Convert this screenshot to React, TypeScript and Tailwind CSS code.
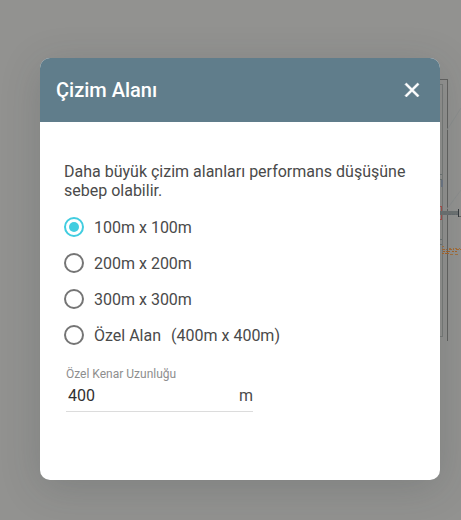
import { useState } from "react";

function PlanDrawing() {
  return (
    <svg
      aria-hidden="true"
      className="absolute left-[430px] top-[70px]"
      width="31"
      height="280"
      viewBox="430 70 31 280"
      fill="none"
      shapeRendering="crispEdges"
    >
      <path d="M430 79.5H447.5V341" stroke="#626260" />
      <path d="M430 84.5H442.5V336.5H430" stroke="#777a78" />
      <path d="M430 174.5H442M430 179.5H442M430 239.5H442M430 244.5H442" stroke="#6e7475" />
      <path d="M441.5 180V187" stroke="#6c7684" strokeWidth="2" />
      <path d="M447 209L461 190M447 130L461 108" stroke="#8b8e8d" shapeRendering="auto" />
      <path d="M440 213H459" stroke="#6d7272" strokeWidth="4" />
      <path d="M448 214.5H458" stroke="#666c6f" strokeDasharray="3 1" />
      <path d="M458.5 209V217" stroke="#343a3e" />
      <path d="M459 216.5H461" stroke="#626260" />
      <path d="M440 206.5H441.5V211M441.5 215V219.5H440" stroke="#a9504c" />
      <path d="M442 246.5H446M449 248.5H461" stroke="#a2713f" strokeDasharray="2 2 1 1" />
      <path d="M442 249.5H461" stroke="#a46a35" strokeDasharray="3 1 1 2" />
      <path d="M443 251.5H457M442 253.5H449" stroke="#a66429" strokeDasharray="2 1 4 2" />
      <path d="M450 254.5H458" stroke="#a2713f" strokeDasharray="3 2" />
    </svg>
  );
}

const sizes = ["100", "200", "300"];

export default function App() {
  const [selected, setSelected] = useState("100");
  const [edge, setEdge] = useState("400");

  const options = [
    ...sizes.map((size) => ({ value: size, label: `${size}m x ${size}m`, detail: "" })),
    { value: "custom", label: "Özel Alan", detail: `(${edge}m x ${edge}m)` },
  ];

  return (
    <main className="relative min-h-screen overflow-hidden bg-[#929290] pt-[58px] pr-5 pb-10 pl-10 font-['Roboto',sans-serif] text-base text-[#4a4a4a]">
      <PlanDrawing />
      <section
        role="dialog"
        aria-labelledby="dialog-title"
        className="relative w-full max-w-[400px] overflow-hidden rounded-[10px] bg-white shadow-[0_8px_40px_0_rgba(38,50,56,0.18)]"
      >
        <header className="flex h-16 items-center justify-between bg-[#607d8b] px-4 text-white">
          <h1 id="dialog-title" className="text-xl font-medium">
            Çizim Alanı
          </h1>
          <button type="button" aria-label="Kapat" className="flex size-6 items-center justify-center">
            <svg width="24" height="24" viewBox="0 0 24 24" fill="currentColor">
              <path
                d="M19 6.41L17.59 5 12 10.59 6.41 5 5 6.41 10.59 12 5 17.59 6.41 19 12 13.41 17.59 19 19 17.59 13.41 12z"
                stroke="currentColor"
                strokeWidth="0.6"
              />
            </svg>
          </button>
        </header>

        <div className="px-6 pt-10 pb-[68px]">
          <p className="leading-[19px]">
            Daha büyük çizim alanları performans düşüşüne sebep olabilir.
          </p>

          <div role="radiogroup" aria-labelledby="dialog-title" className="mt-[9px]">
            {options.map((option) => (
              <label key={option.value} className="flex h-9 items-center gap-[10px]">
                <input
                  type="radio"
                  name="area"
                  value={option.value}
                  checked={selected === option.value}
                  onChange={() => setSelected(option.value)}
                  className="size-5 shrink-0 appearance-none rounded-full border-2 border-[#757575] bg-clip-content p-[3px] checked:border-[#42cde0] checked:bg-[#42cde0]"
                />
                <span className="pt-0.5">{option.label}</span>
                {option.detail && <span className="pt-0.5">{option.detail}</span>}
              </label>
            ))}
          </div>

          <div className="mt-[13px] ml-0.5 w-[187px]">
            <label htmlFor="edge" className="block text-xs text-[#8e8e8e]">
              Özel Kenar Uzunluğu
            </label>
            <div className="flex h-[30px] items-center border-b border-[#dcdcdc] pb-0.5 pl-0.5">
              <input
                id="edge"
                type="text"
                inputMode="numeric"
                value={edge}
                onChange={(event) => setEdge(event.target.value)}
                className="w-full min-w-0 flex-1 bg-transparent text-[#303030] outline-none"
              />
              <span>m</span>
            </div>
          </div>
        </div>
      </section>
    </main>
  );
}
